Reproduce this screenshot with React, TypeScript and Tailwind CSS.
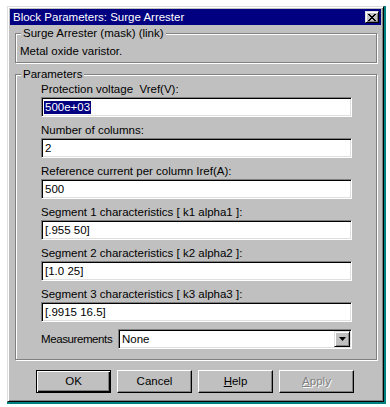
const raised =
  "border border-t-[#dfdfdf] border-l-[#dfdfdf] border-r-black border-b-black shadow-[inset_1px_1px_0_#fff,inset_-1px_-1px_0_#808080] bg-[#c0c0c0]";

const sunken =
  "border border-t-[#808080] border-l-[#808080] border-r-white border-b-white shadow-[inset_1px_1px_0_#000,inset_-1px_-1px_0_#dfdfdf] bg-white";

const groupBox =
  "border border-[#808080] shadow-[inset_1px_1px_0_#fff,1px_1px_0_#fff] min-w-0";

function Field({ label, value, selected }: { label: string; value: string; selected?: boolean }) {
  return (
    <div className="mt-[7px] first:mt-0">
      <div className="leading-[13px] whitespace-pre">{label}</div>
      <div className={`${sunken} mt-[1px] h-[20px] w-[311px] flex items-center pl-[2px]`}>
        {selected ? (
          <span className="bg-[#000080] text-white leading-[13px] px-[1px]">{value}</span>
        ) : (
          <span className="leading-[13px] px-[1px]">{value}</span>
        )}
      </div>
    </div>
  );
}

function Button({ children, isDefault, disabled }: { children: React.ReactNode; isDefault?: boolean; disabled?: boolean }) {
  const look = isDefault
    ? "border border-black shadow-[inset_1px_1px_0_#fff,inset_-1px_-1px_0_#000,inset_-2px_-2px_0_#808080] bg-[#c0c0c0]"
    : "border border-t-white border-l-white border-r-black border-b-black shadow-[inset_-1px_-1px_0_#808080] bg-[#c0c0c0]";
  return (
    <button
      className={`${look} w-[75px] h-[23px] flex items-center justify-center leading-[13px] ${
        disabled ? "text-[#808080] [text-shadow:1px_1px_0_#fff]" : "text-black"
      }`}
    >
      {children}
    </button>
  );
}

export default function App() {
  return (
    <div className="w-[390px] h-[407px] bg-white pl-[7px] pt-[6px] font-['Liberation_Sans',Arial,sans-serif] text-[11.5px] text-black">
      <div className="w-[379px] h-[398px] border-0 border-r-2 border-b-2 border-r-[#008080] border-b-[#008080]">
        {/* Window */}
        <div className="w-[377px] h-[396px] bg-[#c0c0c0] border border-t-[#dfdfdf] border-l-[#dfdfdf] border-r-black border-b-black shadow-[inset_1px_1px_0_#fff,inset_-1px_-1px_0_#808080] p-[2px] flex flex-col">

          {/* Title bar */}
          <div className="h-[16px] bg-[#000080] flex items-center justify-between pl-[3px] pr-[2px]">
            <span className="text-white leading-[14px]">Block Parameters: Surge Arrester</span>
            <div className={`${raised} w-[14px] h-[12px] flex items-center justify-center`}>
              <svg width="8" height="7" viewBox="0 0 8 7">
                <path d="M0 0h2v1h1v1h2V1h1V0h2v1H7v1H6v1H5v1h1v1h1v1h1v1H6V6H5V5H3v1H2v1H0V6h1V5h1V4h1V3H2V2H1V1H0z" fill="#000" />
              </svg>
            </div>
          </div>

          {/* Description */}
          <fieldset className={`${groupBox} mt-[2px] ml-[5px] mr-[4px] p-0`}>
            <legend className="ml-[5px] px-[2px] leading-[13px] bg-[#c0c0c0]">Surge Arrester (mask) (link)</legend>
            <div className="pt-[5px] pb-[4px] pl-[4px] leading-[13px]">Metal oxide varistor.</div>
          </fieldset>

          {/* Parameters */}
          <fieldset className={`${groupBox} mt-[5px] ml-[5px] mr-[4px] p-0`}>
            <legend className="ml-[5px] px-[2px] leading-[13px] bg-[#c0c0c0]">Parameters</legend>
            <div className="pt-[2px] pb-[10px] pl-[25px]">
              <Field label="Protection voltage  Vref(V):" value="500e+03" selected />
              <Field label="Number of columns:" value="2" />
              <Field label="Reference current per column Iref(A):" value="500" />
              <Field label="Segment 1 characteristics [ k1 alpha1 ]:" value="[.955 50]" />
              <Field label="Segment 2 characteristics [ k2 alpha2 ]:" value="[1.0 25]" />
              <Field label="Segment 3 characteristics [ k3 alpha3 ]:" value="[.9915 16.5]" />

              <div className="mt-[7px] flex items-center">
                <span className="w-[77px] leading-[13px] tracking-[-0.4px]">Measurements</span>
                <div className={`${sunken} w-[234px] h-[20px] flex items-center justify-between pl-[3px] pr-[1px]`}>
                  <span className="leading-[13px]">None</span>
                  <div className={`${raised} w-[16px] h-[16px] flex items-center justify-center`}>
                    <svg width="7" height="4" viewBox="0 0 7 4">
                      <path d="M0 0h7L3.5 4z" fill="#000" />
                    </svg>
                  </div>
                </div>
              </div>
            </div>
          </fieldset>

          {/* Buttons */}
          <div className="mt-[10px] pl-[26px] flex gap-[6px]">
            <Button isDefault>OK</Button>
            <Button>Cancel</Button>
            <Button>
              <span><span className="underline">H</span>elp</span>
            </Button>
            <Button disabled>
              <span><span className="underline">A</span>pply</span>
            </Button>
          </div>
        </div>
      </div>
    </div>
  );
}
